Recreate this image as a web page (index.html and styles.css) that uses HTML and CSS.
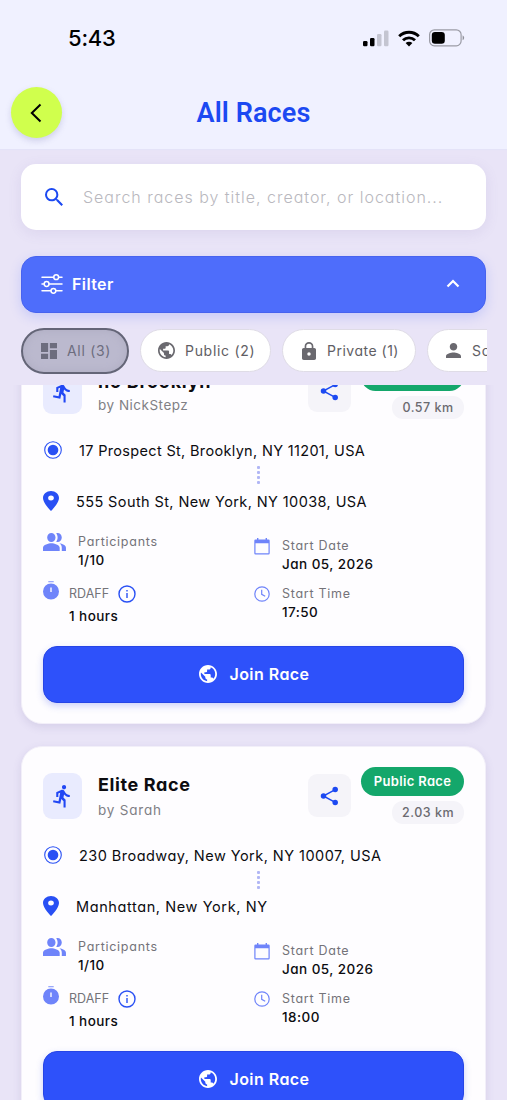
FILE: index.html
```html
<!DOCTYPE html>
<html lang="en">
<head>
<meta charset="utf-8">
<title>All Races</title>
<link rel="stylesheet" href="styles.css">
</head>
<body>
<svg class="defs" aria-hidden="true">
  <symbol id="globe" viewBox="2 2 20 20"><path d="M12 2C6.48 2 2 6.48 2 12s4.48 10 10 10 10-4.48 10-10S17.52 2 12 2zm-1 17.93c-3.95-.49-7-3.85-7-7.93 0-.62.08-1.21.21-1.79L9 15v1c0 1.1.9 2 2 2v1.93zm6.9-2.54c-.26-.81-1-1.39-1.9-1.39h-1v-3c0-.55-.45-1-1-1H8v-2h2c.55 0 1-.45 1-1V7h2c1.1 0 2-.9 2-2v-.41c2.93 1.19 5 4.06 5 7.41 0 2.08-.8 3.97-2.1 5.39z"/></symbol>
  <symbol id="run" viewBox="0 0 24 24"><path d="M13.49 5.48c1.1 0 2-.9 2-2s-.9-2-2-2-2 .9-2 2 .9 2 2 2zm-3.6 13.9l1-4.4 2.1 2v6h2v-7.5l-2.1-2 .6-3c1.3 1.5 3.3 2.5 5.5 2.5v-2c-1.9 0-3.5-1-4.3-2.4l-1-1.6c-.4-.6-1-1-1.7-1-.3 0-.5.1-.8.1l-5.2 2.2v4.7h2v-3.4l1.8-.7-1.6 8.1-4.9-1-.4 2 7 1.4z"/></symbol>
  <symbol id="share" viewBox="0 0 20 20"><path d="M16.500 3L3.500 10L16.500 17" fill="none" stroke="currentColor" stroke-width="1.500"/><circle cx="16" cy="3.200" r="2.900"/><circle cx="3.700" cy="10" r="2.900"/><circle cx="16" cy="16.800" r="2.900"/></symbol>
  <symbol id="pin" viewBox="5 2 14 20" preserveAspectRatio="none"><path d="M12 2C8.130 2 5 5.130 5 9c0 5.250 7 13 7 13s7-7.750 7-13c0-3.870-3.130-7-7-7zm0 9.500a2.500 2.500 0 1 1 0-5 2.500 2.500 0 0 1 0 5z"/></symbol>
  <symbol id="radio" viewBox="0 0 18 18"><circle cx="9" cy="9" r="8.300" fill="none" stroke="currentColor" stroke-width="1.100"/><circle cx="9" cy="9" r="5.300"/></symbol>
  <symbol id="people" viewBox="1 4 23 16" preserveAspectRatio="none"><path d="M16.670 13.130C18.040 14.060 19 15.320 19 17v3h4v-3c0-2.180-3.570-3.470-6.330-3.870zM15 12c2.210 0 4-1.790 4-4s-1.790-4-4-4c-.47 0-.91.1-1.330.24C14.500 5.270 15 6.580 15 8s-.5 2.730-1.330 3.760c.42.14.86.24 1.330.24zM9 12c2.210 0 4-1.790 4-4s-1.790-4-4-4-4 1.790-4 4 1.790 4 4 4zm0 1c-2.670 0-8 1.340-8 4v3h16v-3c0-2.660-5.330-4-8-4z"/></symbol>
  <symbol id="timer" viewBox="0 0 16 19"><path d="M5.300 0h5.400v1.300H5.300z" opacity=".7"/><path fill-rule="evenodd" d="M8 2.500a8 8 0 1 0 0 16 8 8 0 0 0 0-16zM7.300 6.500h1.400v4.600H7.300z"/></symbol>
  <symbol id="info" viewBox="0 0 18 18"><circle cx="9" cy="9" r="8" fill="none" stroke="currentColor" stroke-width="1.400"/><path d="M8.300 8h1.400v5H8.300zM8.300 5h1.400v1.500H8.300z"/></symbol>
  <symbol id="calendar" viewBox="0 0 16 17"><path fill-rule="evenodd" d="M3 0h1.400v1.500h7.200V0H13v1.500h1.500A1.200 1.200 0 0 1 15.700 2.700v12.600a1.200 1.200 0 0 1-1.200 1.200h-13A1.200 1.200 0 0 1 .3 15.300V2.700a1.200 1.200 0 0 1 1.200-1.200H3zM1.500 5.300v10h13v-10z"/></symbol>
  <symbol id="clock" viewBox="0 0 16 16"><g fill="none" stroke="currentColor" stroke-width="1.200"><circle cx="8" cy="8" r="7.200"/><path d="M7.700 3.800v4.500l3.500 2"/></g></symbol>
</svg>

<header class="top">
  <div class="status">
    <span class="time">5:43</span>
    <svg class="signal" viewBox="0 0 26 17"><rect x="0" y="11" width="4.500" height="5.300" rx="1.200"/><rect x="7" y="8" width="4.500" height="8.300" rx="1.200"/><g fill="#c4c5d1"><rect x="14" y="4" width="4.500" height="12.300" rx="1.200"/><rect x="21" y="0.500" width="4.500" height="15.800" rx="1.200"/></g></svg>
    <svg class="wifi" viewBox="0 0 22 17"><g fill="none" stroke="#000" stroke-width="2.900"><path d="M1.200 6.200a14 14 0 0 1 19.600 0"/><path d="M5 10.300a8.600 8.600 0 0 1 12 0"/></g><path d="M11 16.500l-3.400-3.400a4.900 4.900 0 0 1 6.800 0z"/></svg>
    <svg class="battery" viewBox="0 0 36 18"><rect x=".6" y=".8" width="31.500" height="16" rx="4.800" fill="none" stroke="#9b9ca6" stroke-width="1.200"/><rect x="2.800" y="2.900" width="13" height="11.800" rx="3.200"/><path d="M33.600 6.300q1.600 1 1.600 2.500t-1.600 2.500z" fill="#8f909a"/></svg>
  </div>
  <div class="nav">
    <button class="back" aria-label="Back"><svg viewBox="0 0 12 20"><path d="M10.500 1.500L1.800 10l8.700 8.500" fill="none" stroke="#000" stroke-width="2"/></svg></button>
    <h1>All Races</h1>
  </div>
</header>

<main>
  <div class="search">
    <svg viewBox="3 3 17.500 17.500"><path d="M15.500 14h-.79l-.28-.27A6.471 6.471 0 0 0 16 9.500 6.500 6.500 0 1 0 9.500 16c1.610 0 3.090-.59 4.230-1.570l.27.28v.79l5 4.990L20.490 19l-4.990-5zm-6 0C7.010 14 5 11.990 5 9.500S7.010 5 9.500 5 14 7.010 14 9.500 11.990 14 9.500 14z"/></svg>
    <span>Search races by title, creator, or location...</span>
  </div>

  <div class="filter">
    <svg class="sliders" viewBox="0 0 22 20"><g fill="none" stroke="#fff" stroke-width="1.500" stroke-linecap="round"><path d="M1 3.200h11.500M17.800 3.200H21M1 10h2M8.200 10H21M1 16.800h8.700M15 16.800h6"/><circle cx="15.200" cy="3.200" r="2.400"/><circle cx="5.600" cy="10" r="2.400"/><circle cx="12.400" cy="16.800" r="2.400"/></g></svg>
    <span>Filter</span>
    <svg class="chev" viewBox="0 0 14 9"><path d="M1.500 7.500L7 2l5.500 5.500" fill="none" stroke="#fff" stroke-width="2.200"/></svg>
  </div>

  <div class="chips">
    <div class="chip all"><svg class="dash" viewBox="3 3 18 18"><path d="M3 13h8V3H3v10zm0 8h8v-6H3v6zm10 0h8V11h-8v10zm0-18v6h8V3h-8z"/></svg><span>All (3)</span></div>
    <div class="chip public"><svg class="globe"><use href="#globe"/></svg><span>Public (2)</span></div>
    <div class="chip private"><svg class="lock" viewBox="4 1 16 21" preserveAspectRatio="none"><path d="M18 8h-1V6c0-2.760-2.240-5-5-5S7 3.240 7 6v2H6c-1.100 0-2 .9-2 2v10c0 1.100.9 2 2 2h12c1.100 0 2-.9 2-2V10c0-1.100-.9-2-2-2zm-6 9a2 2 0 1 1 0-4 2 2 0 0 1 0 4zm3.100-9H8.900V6a3.100 3.100 0 0 1 6.200 0v2z"/></svg><span>Private (1)</span></div>
    <div class="chip solo"><svg class="person" viewBox="4 4 16 16"><path d="M12 12c2.210 0 4-1.790 4-4s-1.790-4-4-4-4 1.790-4 4 1.790 4 4 4zm0 2c-2.670 0-8 1.340-8 4v2h16v-2c0-2.660-5.330-4-8-4z"/></svg><span>Solo (0)</span></div>
  </div>

  <section class="list">
    <article class="card">
      <div class="head">
        <div class="runner"><svg><use href="#run"/></svg></div>
        <div class="names"><h2 class="wide">no Brooklyn</h2><p class="tight">by NickStepz</p></div>
        <button class="share" aria-label="Share"><svg><use href="#share"/></svg></button>
        <div class="tags"><span class="badge">Public Race</span><span class="km">0.57 km</span></div>
      </div>
      <div class="place"><svg class="radio"><use href="#radio"/></svg><span class="a1">17 Prospect St, Brooklyn, NY 11201, USA</span></div>
      <div class="dots"><i></i><i></i><i></i><i></i></div>
      <div class="place"><svg class="pin"><use href="#pin"/></svg><span class="a2">555 South St, New York, NY 10038, USA</span></div>
      <div class="facts">
        <div class="col">
          <div class="fact people"><svg><use href="#people"/></svg><div><label>Participants</label><b>1/10</b></div></div>
          <div class="fact timer"><svg><use href="#timer"/></svg><div><label class="rdaff">RDAFF <svg class="info"><use href="#info"/></svg></label><b>1 hours</b></div></div>
        </div>
        <div class="col right">
          <div class="fact cal"><svg><use href="#calendar"/></svg><div><label>Start Date</label><b>Jan 05, 2026</b></div></div>
          <div class="fact clock"><svg><use href="#clock"/></svg><div><label>Start Time</label><b>17:50</b></div></div>
        </div>
      </div>
      <button class="join"><svg><use href="#globe"/></svg>Join Race</button>
    </article>

    <article class="card">
      <div class="head">
        <div class="runner"><svg><use href="#run"/></svg></div>
        <div class="names"><h2>Elite Race</h2><p>by Sarah</p></div>
        <button class="share" aria-label="Share"><svg><use href="#share"/></svg></button>
        <div class="tags"><span class="badge">Public Race</span><span class="km">2.03 km</span></div>
      </div>
      <div class="place"><svg class="radio"><use href="#radio"/></svg><span class="a3">230 Broadway, New York, NY 10007, USA</span></div>
      <div class="dots"><i></i><i></i><i></i><i></i></div>
      <div class="place"><svg class="pin"><use href="#pin"/></svg><span class="a4">Manhattan, New York, NY</span></div>
      <div class="facts">
        <div class="col">
          <div class="fact people"><svg><use href="#people"/></svg><div><label>Participants</label><b>1/10</b></div></div>
          <div class="fact timer"><svg><use href="#timer"/></svg><div><label class="rdaff">RDAFF <svg class="info"><use href="#info"/></svg></label><b>1 hours</b></div></div>
        </div>
        <div class="col right">
          <div class="fact cal"><svg><use href="#calendar"/></svg><div><label>Start Date</label><b>Jan 05, 2026</b></div></div>
          <div class="fact clock"><svg><use href="#clock"/></svg><div><label>Start Time</label><b>18:00</b></div></div>
        </div>
      </div>
      <button class="join"><svg><use href="#globe"/></svg>Join Race</button>
    </article>
  </section>
</main>
</body>
</html>
```
FILE: styles.css
```css
* { box-sizing: border-box; }
body {
  margin: 0;
  height: 1100px;
  overflow: hidden;
  display: flex;
  flex-direction: column;
  background: #e9e4f7;
  color: #0c0c10;
  font-family: Inter, "Noto Sans", sans-serif;
  font-feature-settings: "cv11";
}
h1, h2, p { margin: 0; }
button { border: 0; padding: 0; font: inherit; font-feature-settings: inherit; }
svg { display: block; flex: none; fill: currentColor; }
.defs { position: absolute; width: 0; height: 0; }

/* Header */
.top { height: 149px; flex: none; background: #f0f1ff; box-shadow: 0 1px 1px #e4e3f8; }
.status { display: flex; align-items: center; height: 76px; padding: 0 42px 0 68px; color: #000; }
.time { flex: 1; font-size: 22px; font-weight: 550; letter-spacing: -0.2px; }
.signal { width: 26px; height: 17px; margin-right: 9px; }
.wifi { width: 22px; height: 17px; margin-right: 9px; }
.battery { width: 36px; height: 18px; }
.nav { display: grid; grid-template-columns: 51px 1fr 51px; align-items: center; height: 73px; padding: 0 11px; }
.back {
  width: 51px; height: 51px; border-radius: 50%;
  display: grid; place-items: center;
  background: #d0ff4d; box-shadow: 0 3px 6px rgba(90, 90, 160, .22);
}
.back svg { width: 12px; height: 20px; margin-right: 1px; }
h1 { text-align: center; font: 600 27px Roboto, sans-serif; letter-spacing: .1px; color: #1c49f2; }

/* Search and filter */
main { flex: 1; min-height: 0; display: flex; flex-direction: column; padding: 15px 0 0; }
.search {
  flex: none; display: flex; align-items: center; gap: 20px; height: 66px; margin: 0 21px; padding-left: 24px;
  border-radius: 15px; background: #fff; color: #1c49f2;
  box-shadow: 0 3px 14px rgba(110, 95, 160, .11);
}
.search svg { width: 18px; height: 18px; }
.search span { font-size: 16px; font-weight: 300; letter-spacing: .98px; color: #b9b8be; white-space: nowrap; }
.filter {
  flex: none; display: flex; align-items: center; height: 57px; margin: 26px 21px 0; padding: 0 27px 2px 19px;
  border-radius: 15px; background: #4e6dfb; color: #fff; border: 1px solid #4763ef;
  box-shadow: 0 4px 12px rgba(80, 110, 255, .22);
  font-size: 16px; font-weight: 600; letter-spacing: .4px;
}
.sliders { width: 22px; height: 20px; margin-right: 9px; }
.filter span { flex: 1; }
.chev { width: 14px; height: 9px; margin-right: -2px; }

.chips { flex: none; display: flex; align-items: center; gap: 11px; height: 50px; margin: 13px 20px 0 21px; padding-bottom: 1px; overflow: hidden; }
.chip {
  flex: none; display: flex; align-items: center; height: 43px;
  border-radius: 22px; border: 1px solid #dfdce6; background: #fff; color: #6a696f;
  font-size: 14px; letter-spacing: .7px; white-space: nowrap;
}
.chip span { color: #5f5e64; }
.all { width: 108px; height: 46px; padding-left: 18px; gap: 10px; border: 2px solid #646577; border-radius: 23px; background: #bbb9ce; box-shadow: inset 0 0 9px #aeacc1; }
.all, .all span { color: #6d6d7e; }
.dash { width: 16px; height: 16px; }
.public { width: 131px; padding-left: 17px; gap: 10px; }
.globe { width: 17px; height: 17px; }
.private { width: 134px; padding-left: 19px; gap: 11px; letter-spacing: .5px; }
.lock { width: 14px; height: 18px; }
.solo { width: 120px; padding-left: 18px; gap: 11px; }
.person { width: 15px; height: 15px; }

/* Race list; the first card is scrolled partly out of view */
.list { flex: 1; min-height: 0; overflow: hidden; margin-top: 9px; padding: 0 21px; display: flex; flex-direction: column; gap: 22px; }
.card {
  flex: none; height: 384px; padding: 21px 21px 0; border-radius: 21px;
  background: #fefdff; border: 1px solid #f2eff9;
  box-shadow: 0 3px 9px rgba(100, 85, 150, .14);
}
.card:first-child { margin-top: -44px; height: 383px; }
.head { display: flex; height: 58px; }
.runner { width: 39px; height: 46px; margin-top: 5px; border-radius: 9px; background: #e9ebfe; color: #2147f4; display: grid; place-items: center; }
.runner svg { width: 25px; height: 26px; }
.names { flex: 1; padding: 4px 0 0 16px; }
h2 { font-size: 18px; line-height: 26px; font-weight: 700; letter-spacing: .62px; white-space: nowrap; }
h2.wide { height: 26px; line-height: 30px; letter-spacing: .75px; }
.names p { font-size: 13.500px; line-height: 24px; font-weight: 400; letter-spacing: .8px; color: #807f85; }
.names p.tight { letter-spacing: .5px; }
.share { width: 43px; height: 43px; margin: 6px 11px 0 0; border-radius: 9px; background: #f5f4f9; color: #1c49f2; display: grid; place-items: center; }
.share svg { width: 19px; height: 20px; }
.tags { display: flex; flex-direction: column; align-items: flex-end; gap: 5px; width: 102px; margin-top: -1px; }
.badge { width: 103px; height: 29px; border-radius: 15px; background: #14a76b; color: #fff; font-size: 13px; line-height: 28px; font-weight: 600; letter-spacing: .35px; text-align: center; white-space: nowrap; }
.km { width: 72px; height: 23px; border-radius: 11px; background: #f5f4f9; color: #6b6a70; font-size: 12.500px; line-height: 23px; font-weight: 500; letter-spacing: .5px; text-align: center; }

.place { display: flex; align-items: center; height: 20px; font-size: 14.500px; white-space: nowrap; }
.head + .place { margin-top: 19px; }
.radio { width: 18px; height: 18px; margin: 0 17px 0 1px; color: #2950f4; }
.pin { width: 16px; height: 20px; margin: 0 17px 0 0; color: #2950f4; }
.a1 { letter-spacing: .33px; }
.a2 { letter-spacing: .4px; }
.a3 { letter-spacing: .46px; }
.a4 { letter-spacing: .6px; }
.dots { display: flex; flex-direction: column; align-items: center; justify-content: center; gap: 2.200px; height: 31px; padding: 0 0 1px 10px; }
.dots i { width: 3px; height: 3px; border-radius: 1px; background: #b1b6f5; }

.facts { display: grid; grid-template-columns: 211px 1fr; height: 119px; padding-top: 21px; }
.fact { display: flex; height: 52px; color: #6f84fa; }
.fact label { display: block; font-size: 12.500px; line-height: 20px; letter-spacing: .73px; color: #747379; }
.fact b { display: block; font-size: 13.500px; line-height: 16px; font-weight: 500; letter-spacing: .45px; color: #0c0c10; }
.people > svg { width: 24px; height: 18px; margin: 1px 11px 0 0; }
.timer > svg { width: 16px; height: 19px; margin: -3px 10px 0 0; }
.fact .rdaff { display: flex; align-items: center; gap: 9px; height: 20px; margin-bottom: 4px; letter-spacing: 0; }
.info { width: 18px; height: 18px; color: #2950f4; }
.right { padding-top: 4px; }
.right .fact { height: 48px; }
.cal > svg { width: 16px; height: 17px; margin: 2px 12px 0 0; }
.clock > svg { width: 16px; height: 16px; margin: 2px 12px 0 0; }
.join {
  display: flex; align-items: center; justify-content: center; gap: 12px; width: 100%; height: 57px; margin-top: 16px; padding: 0 0 1px 2px;
  border-radius: 14px; background: #2e51fa; color: #fff; border: 1px solid #2645e6;
  box-shadow: 0 3px 7px rgba(60, 80, 230, .25);
  font-size: 16px; font-weight: 600; letter-spacing: .45px;
}
.join svg { width: 18px; height: 18px; }
```
